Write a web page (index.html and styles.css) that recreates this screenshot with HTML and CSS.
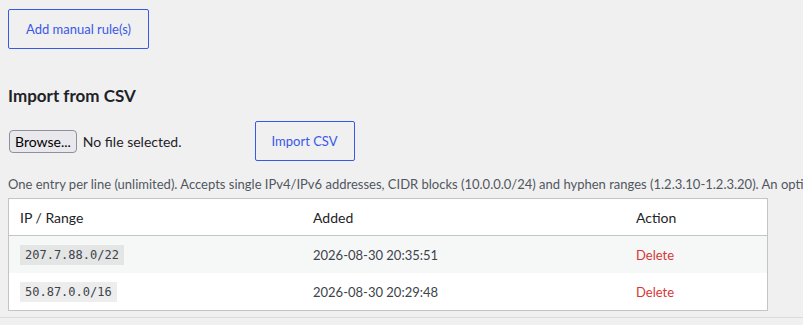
FILE: index.html
```html
<!DOCTYPE html>
<html lang="en">
<head>
    <meta charset="UTF-8">
    <meta name="viewport" content="width=device-width, initial-scale=1.0">
    <title>IP Rules</title>
    <link rel="stylesheet" href="styles.css">
</head>
<body>

    <div class="wrap">
        <button class="button">Add manual rule(s)</button>

        <h2>Import from CSV</h2>

        <div class="import-row">
            <div class="file-input">
                <button class="browse">Browse...</button>
                <span class="file-name">No file selected.</span>
            </div>
            <button class="button button-small">Import CSV</button>
        </div>

        <p class="description">One entry per line (unlimited). Accepts single IPv4/IPv6 addresses, CIDR blocks (10.0.0.0/24) and hyphen ranges (1.2.3.10-1.2.3.20). An optional comment may follow each entry.</p>

        <table class="rules">
            <thead>
                <tr>
                    <th class="col-ip">IP / Range</th>
                    <th class="col-added">Added</th>
                    <th>Action</th>
                </tr>
            </thead>
            <tbody>
                <tr class="alt">
                    <td><code>207.7.88.0/22</code></td>
                    <td>2026-08-30 20:35:51</td>
                    <td><a href="#" class="delete">Delete</a></td>
                </tr>
                <tr>
                    <td><code>50.87.0.0/16</code></td>
                    <td>2026-08-30 20:29:48</td>
                    <td><a href="#" class="delete">Delete</a></td>
                </tr>
            </tbody>
        </table>
    </div>

    <hr class="divider">

</body>
</html>
```

FILE: styles.css
```css
body {
    margin: 0;
    background-color: #f0f0f1;
    color: #1d2327;
    font-family: "Segoe UI", Lato, sans-serif;
    font-size: 13px;
    overflow: hidden;
}
.wrap {
    padding: 9px 0 0 8px;
}
.button {
    display: inline-block;
    height: 40px;
    padding: 0 17px;
    border: 1px solid #3858e9;
    border-radius: 2px;
    background: transparent;
    color: #3858e9;
    font-family: inherit;
    font-size: 13px;
    cursor: pointer;
}
.button-small {
    padding: 0 16px;
}
h2 {
    margin: 32px 0 0;
    font-size: 17px;
    font-weight: 700;
    line-height: 30px;
}
.import-row {
    display: flex;
    align-items: center;
    gap: 73px;
    margin-top: 10px;
}
.file-input {
    display: flex;
    align-items: center;
    gap: 6px;
    font-size: 14px;
}
.browse {
    height: 23px;
    padding: 0 5px;
    margin-left: 1px;
    border: 1px solid #8f8f9d;
    border-radius: 4px;
    background: #e9e9ed;
    color: #000;
    font-family: inherit;
    font-size: 14px;
}
.file-name {
    color: #1d2327;
}
.description {
    margin: 13px 0 0;
    color: #50575e;
    white-space: nowrap;
    line-height: 20px;
}
.rules {
    width: 760px;
    margin-top: 4px;
    border: 1px solid #c3c4c7;
    border-collapse: collapse;
    background: #fff;
}
.rules th {
    height: 36px;
    padding: 0 11px;
    border-bottom: 1px solid #c3c4c7;
    text-align: left;
    font-weight: 400;
    font-size: 14px;
    color: #1d2327;
}
.rules td {
    height: 37px;
    padding: 0 11px;
    color: #3c434a;
    font-size: 13px;
}
.col-ip {
    width: 271px;
}
.col-added {
    width: 301px;
}
.rules tr.alt td {
    background: #f6f7f7;
}
code {
    display: inline-block;
    padding: 0 5px;
    line-height: 20px;
    background: rgba(0, 0, 0, 0.07);
    font-family: "DejaVu Sans Mono", monospace;
    font-size: 12px;
    color: #3c434a;
}
.delete {
    color: #d63638;
    text-decoration: none;
}
.divider {
    margin: 6px 0 0;
    border: 0;
    border-top: 1px solid #dcdcde;
}
```
